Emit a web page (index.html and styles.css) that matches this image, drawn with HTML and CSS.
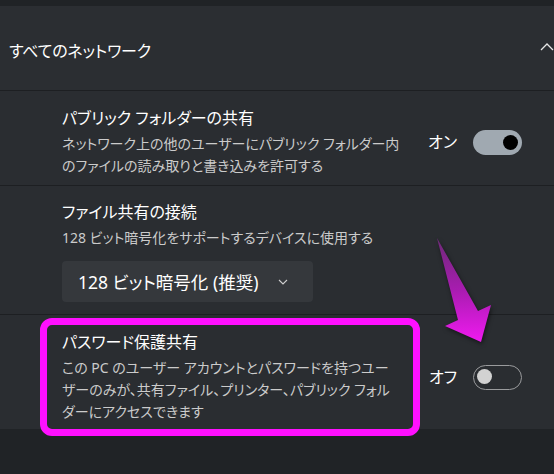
FILE: index.html
```html
<!DOCTYPE html>
<html lang="ja">
<head>
<meta charset="utf-8">
<title>すべてのネットワーク</title>
<link rel="stylesheet" href="styles.css">
</head>
<body>
<div class="page">
  <section class="panel">
    <div class="header">
      <span class="header-title">すべてのネットワーク</span>
      <svg class="chev-up" width="14" height="8" viewBox="0 0 14 8"><path d="M1 7 L7 1 L13 7" fill="none" stroke="#e6e6e6" stroke-width="1.3"/></svg>
    </div>
    <div class="row">
      <div class="text">
        <div class="title">パブリック フォルダーの共有</div>
        <div class="desc">ネットワーク上の他のユーザーにパブリック フォルダー内<br>のファイルの読み取りと書き込みを許可する</div>
      </div>
      <div class="control">
        <span class="state">オン</span>
        <span class="toggle on"><span class="knob"></span></span>
      </div>
    </div>
    <div class="row row-select">
      <div class="text">
        <div class="title">ファイル共有の接続</div>
        <div class="desc">128 ビット暗号化をサポートするデバイスに使用する</div>
        <div class="select">
          <span>128 ビット暗号化 (推奨)</span>
          <svg width="10" height="6" viewBox="0 0 10 6"><path d="M1 1 L5 5 L9 1" fill="none" stroke="#cfcfcf" stroke-width="1.1"/></svg>
        </div>
      </div>
    </div>
    <div class="row last">
      <div class="text">
        <div class="title">パスワード保護共有</div>
        <div class="desc">この PC のユーザー アカウントとパスワードを持つユー<br>ザーのみが、共有ファイル、プリンター、パブリック フォル<br>ダーにアクセスできます</div>
      </div>
      <div class="control">
        <span class="state">オフ</span>
        <span class="toggle off"><span class="knob"></span></span>
      </div>
    </div>
  </section>
  <div class="highlight"></div>
  <svg class="arrow" width="90" height="120" viewBox="0 0 90 120">
    <defs>
      <linearGradient id="ag" x1="0" y1="0" x2="0" y2="1">
        <stop offset="0" stop-color="#6e2a78"/>
        <stop offset="0.5" stop-color="#a81cb0"/>
        <stop offset="1" stop-color="#f01af0"/>
      </linearGradient>
    </defs>
    <polygon points="17,8 58,81 71,75 61,112 25,96 38,90" fill="url(#ag)"/>
  </svg>
</div>
</body>
</html>
```
FILE: styles.css
```css
* { box-sizing: border-box; }
html, body { margin: 0; padding: 0; }
body {
  background: #202326;
  font-family: "Noto Sans", "Noto Sans CJK JP", sans-serif;
  font-feature-settings: "palt";
  color: #ffffff;
  width: 554px;
  height: 474px;
  overflow: hidden;
}
.page {
  position: relative;
  width: 554px;
  height: 474px;
  padding-top: 6px;
}
.panel {
  background: #2b2e32;
}
.header {
  height: 85px;
  display: flex;
  align-items: center;
  justify-content: space-between;
  padding: 0 0 0 9px;
  border-bottom: 1px solid #1d1f22;
}
.header-title {
  font-size: 16px;
  line-height: 22px;
  margin-top: 6px;
  letter-spacing: -0.2px;
}
.chev-up { margin-right: 0; margin-top: -2px; }
.row {
  display: flex;
  align-items: center;
  padding: 16px 32px 8px 62px;
  border-bottom: 1px solid #1d1f22;
  background: #2a2d31;
}
.row-select { padding-top: 15px; padding-bottom: 12px; }
.row.last { border-bottom: none; padding-bottom: 6px; }
.text { flex: 1; }
.title {
  font-size: 16px;
  line-height: 22px;
  color: #ffffff;
  margin-bottom: 4px;
}
.desc {
  font-size: 14px;
  line-height: 22px;
  color: #cbcbcb;
  white-space: nowrap;
}
.control {
  display: flex;
  align-items: center;
  gap: 16px;
}
.state {
  font-size: 16px;
  line-height: 22px;
  white-space: nowrap;
}
.toggle {
  position: relative;
  display: block;
  width: 49px;
  height: 25px;
  border-radius: 13px;
}
.toggle .knob {
  position: absolute;
  top: 5px;
  width: 15px;
  height: 15px;
  border-radius: 50%;
}
.toggle.on { background: #a0a9b1; }
.toggle.on .knob { right: 4px; background: #000000; }
.toggle.off { border: 1.5px solid #9a9b9d; }
.toggle.off .knob { left: 3px; top: 3.5px; background: #d2d2d2; }
.select {
  margin-top: 12px;
  width: 251px;
  height: 41px;
  background: #35383c;
  border-radius: 4px;
  display: flex;
  align-items: center;
  padding-left: 16px;
  gap: 20px;
  font-size: 17.5px;
  color: #ffffff;
}
.highlight {
  position: absolute;
  left: 40px;
  top: 318px;
  width: 380px;
  height: 118px;
  border: 7px solid #ff10ff;
  border-radius: 12px;
}
.arrow {
  position: absolute;
  left: 420px;
  top: 230px;
  filter: drop-shadow(1px 2px 2px rgba(0,0,0,0.5));
}
```
